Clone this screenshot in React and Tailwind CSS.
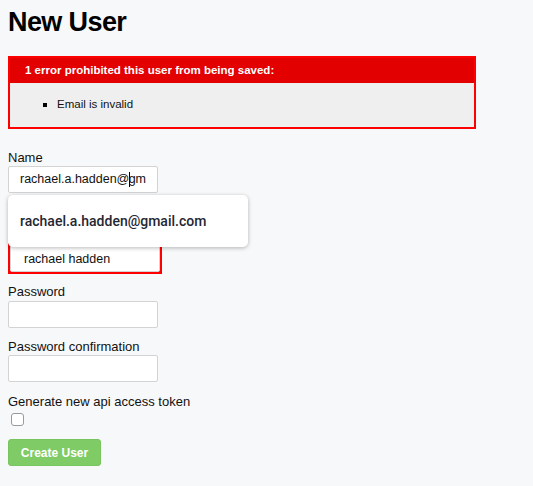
import React from "react";

const Label = ({ children, className = "" }) => (
  <label className={`block text-[13px] leading-[15px] text-[#111] ${className}`}>{children}</label>
);

const TextInput = ({ type = "text", value, className = "" }) => (
  <input
    type={type}
    defaultValue={value}
    readOnly
    className={`block w-[150px] h-[27px] px-[11px] bg-white border border-[#d3d3d3] rounded-[2px] text-[12.5px] text-[#111] outline-none ${className}`}
  />
);

const NewUserForm = () => {
  return (
    <div className="relative min-h-screen bg-[#f7f8fa] px-2 font-['Liberation_Sans',Arial,sans-serif] text-[#111]">
      <h1 className="pt-[7px] text-[27px] leading-[30px] font-bold tracking-[-0.6px] text-black">New User</h1>

      {/* error explanation */}
      <div className="mt-[19px] w-[468px] border-2 border-[#ff0000]">
        <div className="h-[25px] px-[15px] flex items-center bg-[#e30000] text-white text-[11.5px] font-bold">
          1 error prohibited this user from being saved:
        </div>
        <ul className="h-[44px] pl-[33px] flex items-center bg-[#efefef]">
          <li className="flex items-center text-[11.5px]">
            <span className="w-[4px] h-[4px] bg-black mr-[10px]" />
            Email is invalid
          </li>
        </ul>
      </div>

      {/* name */}
      <Label className="mt-[21px]">Name</Label>
      <div className="mt-[1px] w-[150px] h-[27px] px-[11px] flex items-center bg-white border border-[#d3d3d3] rounded-[2px] text-[12.5px] text-[#111]">
        rachael.a.hadden@
        <span className="inline-block w-px h-[15px] bg-black -mr-px" />
        gm
      </div>

      {/* email (with errors), its label sits under the autocomplete popup */}
      <Label className="mt-[11px]">Email</Label>
      <div className="mt-[24px] w-[154px] p-[2px] bg-[#ff0000]">
        <TextInput value="rachael hadden" className="px-[13px]" />
      </div>

      <Label className="mt-[10px]">Password</Label>
      <TextInput type="password" className="mt-[2px]" />

      <Label className="mt-[11px]">Password confirmation</Label>
      <TextInput type="password" className="mt-[1px]" />

      <Label className="mt-[12px]">Generate new api access token</Label>
      <div className="mt-[4px] pl-[3px] flex">
        <span className="w-[13px] h-[13px] bg-white border border-[#9a9a9a] rounded-[3px]" />
      </div>

      <button className="mt-[13px] mb-4 w-[93px] h-[27px] rounded-[3px] bg-[#7fcb65] border border-[#78c45e] text-white text-[12px] font-bold">
        Create User
      </button>

      {/* autocomplete popup */}
      <div className="absolute left-2 top-[195px] w-[240px] h-[52px] px-[12px] flex items-center bg-white rounded-[5px] shadow-[0_1px_4px_rgba(0,0,0,0.28)] font-['Roboto',Arial,sans-serif] text-[14px] font-medium text-[#1f2733]">
        rachael.a.hadden@gmail.com
      </div>
    </div>
  );
};

export default NewUserForm;
